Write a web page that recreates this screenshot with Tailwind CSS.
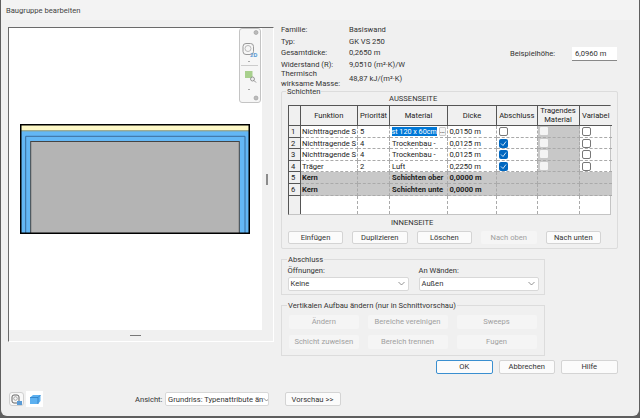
<!DOCTYPE html>
<html lang="de">
<head>
  <meta charset="UTF-8">
  <meta name="viewport" content="width=device-width, initial-scale=1.0">
  <title>Baugruppe bearbeiten</title>
  <script src="https://cdn.jsdelivr.net/npm/@tailwindcss/browser@4"></script>
</head>
<body class="bg-[#5f5f5f] overflow-hidden">

  <!-- Dialog -->
  <div class="w-[638px] h-[416px] ml-px bg-[#f0f0f0] rounded-b-md font-['Roboto',sans-serif] text-[7.600px] leading-[11px] text-[#333] flex flex-col overflow-hidden">

    <!-- Titlebar -->
    <div class="h-[20px] shrink-0 pl-[5px] pt-[5px] bg-[#f3f3f3] text-[#444]">Baugruppe bearbeiten</div>

    <div class="flex flex-1">

      <!-- Preview -->
      <div class="w-[273px] shrink-0 pl-[7px] pt-[7px]">
        <div class="relative w-[266px] h-[315px] border-t border-l border-[#6a6a6a] border-r border-r-white border-b border-b-white flex flex-col">
          <div class="flex flex-1">
            <div class="relative flex-1 bg-white">
              <svg class="absolute left-[11px] top-[96px]" width="232" height="112" viewBox="0 0 232 112">
                <rect x="0" y="0" width="230" height="110" fill="#63b7f5"/>
                <rect x="0" y="1" width="230" height="5.500" fill="#fdf8c6"/>
                <line x1="0" y1="6.800" x2="230" y2="6.800" stroke="#9a9a70" stroke-width="1"/>
                <path d="M5.700 110V12.300H225V110" fill="none" stroke="#3b6c9c" stroke-width="1"/>
                <rect x="10.700" y="17.500" width="208.600" height="92" fill="#b4b4b4" stroke="#444" stroke-width="1"/>
                <rect x=".75" y=".75" width="228.500" height="108.500" fill="none" stroke="#000" stroke-width="1.500"/>
              </svg>
              <!-- Navigationsleiste -->
              <div class="absolute left-[230px] top-0 w-[22px] h-[75px] bg-[#f6f6f6] border border-[#c4c4c4] rounded-[3px]">
                <svg width="20" height="73" viewBox="0 0 20 73">
                  <circle cx="16" cy="3.500" r="2" fill="#bbb" stroke="#999" stroke-width=".6"/>
                  <circle cx="16" cy="69" r="2" fill="#bbb" stroke="#999" stroke-width=".6"/>
                  <rect x="3" y="14.500" width="10.500" height="11" rx="3" fill="none" stroke="#999" stroke-width="1"/>
                  <circle cx="8" cy="19.500" r="3" fill="none" stroke="#aaa" stroke-width=".8"/>
                  <path d="M8 32l1 1 1-1" fill="none" stroke="#888" stroke-width=".7"/>
                  <line x1="1" y1="36.500" x2="18" y2="36.500" stroke="#ccc"/>
                  <rect x="5" y="42" width="7.500" height="7" fill="#a8d08d"/>
                  <circle cx="12.500" cy="50" r="2" fill="#eee" stroke="#777" stroke-width=".7"/>
                  <line x1="14" y1="51.500" x2="16" y2="53.500" stroke="#777" stroke-width=".8"/>
                  <path d="M8 60l1 1 1-1" fill="none" stroke="#888" stroke-width=".7"/>
                </svg>
                <span class="absolute left-[10px] top-[22px] text-[6px] leading-[7px] font-bold text-[#5b9bd5]">2D</span>
              </div>
            </div>
            <div class="w-[11px] flex items-center"><span class="block w-[2px] h-[11px] ml-[4px] mt-[1px] bg-[#8c8c8c]"></span></div>
          </div>
          <div class="h-[11px] pt-[5px] pl-[121px]"><span class="block w-[11px] h-px bg-[#777]"></span></div>
        </div>

        <!-- Ansicht -->
        <div class="flex items-center mt-[49px] relative">
          <div class="w-[15px] h-[14px] ml-px bg-[#f8f8f8] border border-[#d0d0d0] rounded-[3px] flex items-center justify-center">
            <svg width="11" height="11" viewBox="0 0 11 11"><rect x="1" y="1" width="7" height="8" rx="2" fill="none" stroke="#666" stroke-width="1"/><circle cx="4.500" cy="4.500" r="1.800" fill="none" stroke="#888" stroke-width=".7"/><rect x="6" y="7" width="5" height="4" fill="#5b9bd5"/></svg>
          </div>
          <div class="w-[17px] h-[16px] ml-[2px] bg-white flex items-center justify-center">
            <svg width="12" height="11" viewBox="0 0 12 11"><path d="M1 3.500L4 1h7.500v6L9 10H1z" fill="#5cb0f0"/><path d="M1 3.500h8V10M9 3.500L11.500 1" fill="none" stroke="#2d7fc4" stroke-width=".8"/></svg>
          </div>
          <span class="ml-[92px] w-[30px]">Ansicht:</span>
          <div class="w-[104px] h-[13.500px] bg-white border border-[#d8d8d8] rounded-[2px] pl-[2px] flex items-center justify-between whitespace-nowrap overflow-hidden">
            <span>Grundriss: Typenattribute än</span>
            <svg class="mr-[2px] shrink-0" width="7" height="5" viewBox="0 0 7 5"><path d="M.5 1l3 3 3-3" fill="none" stroke="#666" stroke-width=".7"/></svg>
          </div>
        </div>
      </div>

      <!-- Rechte Seite -->
      <div class="w-[337px] ml-[7px] pt-[4px]">

        <!-- Angaben -->
        <div class="flex h-[67px]">
          <div class="w-[229px]">
            <div class="flex h-[11.500px]"><span class="w-[68px]">Familie:</span><span>Basiswand</span></div>
            <div class="flex h-[11.500px]"><span class="w-[68px]">Typ:</span><span>GK VS 250</span></div>
            <div class="flex h-[11.500px]"><span class="w-[68px]">Gesamtdicke:</span><span>0,2650 m</span></div>
            <div class="flex h-[11.500px]"><span class="w-[68px]">Widerstand (R):</span><span>9,0510 (m²·K)/W</span></div>
            <div class="flex items-center h-[17px] leading-[9.500px]"><span class="w-[68px] shrink-0 pr-[2px]">Thermisch wirksame Masse:</span><span>48,87 kJ/(m²·K)</span></div>
          </div>
          <div class="flex items-start pt-[23px]">
            <span class="w-[62px] pt-px">Beispielhöhe:</span>
            <span class="w-[45px] h-[14px] pl-[3px] pt-px bg-white border-b border-[#888]">6,0960 m</span>
          </div>
        </div>

        <!-- Schichten -->
        <div class="relative w-[337px] h-[158px] mt-[-0.500px] border border-[#dcdcdc] rounded-[2px] px-[6px]">
          <span class="absolute left-[4px] top-[-6px] px-px bg-[#f0f0f0]">Schichten</span>
          <div class="h-[13px] pt-px pl-[101px]">AUSSENSEITE</div>
          <div class="grid grid-cols-[11.500px_57.500px_32px_58px_49px_40.500px_42px_32.500px] grid-rows-[20.500px_repeat(6,11.600px)_18px] w-[323px] bg-white border border-[#c4c4c4] border-t-[#555] border-l-[#555] text-[#222]">
            <!-- Kopf -->
            <div class="bg-[#f0f0f0] border-r border-b border-[#555]"></div>
            <div class="bg-[#f0f0f0] border-r border-b border-[#555] flex items-center justify-center">Funktion</div>
            <div class="bg-[#f0f0f0] border-r border-b border-[#555] flex items-center justify-center">Priorität</div>
            <div class="bg-[#f0f0f0] border-r border-b border-[#555] flex items-center justify-center">Material</div>
            <div class="bg-[#f0f0f0] border-r border-b border-[#555] flex items-center justify-center">Dicke</div>
            <div class="bg-[#f0f0f0] border-r border-b border-[#555] flex items-center justify-center">Abschluss</div>
            <div class="bg-[#f0f0f0] border-r border-b border-[#555] flex items-center justify-center text-center leading-[9.500px]">Tragendes Material</div>
            <div class="bg-[#f0f0f0] border-b border-[#555] flex items-center justify-center">Variabel</div>

            <!-- Zeile 1 -->
            <div class="bg-[#f0f0f0] border-r border-b border-[#555] pl-[2px]">1</div>
            <div class="border-r border-b border-dashed border-[#aaa] pl-[1.500px] whitespace-nowrap overflow-hidden">Nichttragende S</div>
            <div class="border-r border-b border-dashed border-[#aaa] pl-[2px]">5</div>
            <div class="flex border-r border-b border-dashed border-[#aaa] pl-[1.500px] pr-px whitespace-nowrap overflow-hidden"><span class="w-[46px] h-[9px] mt-px leading-[9px] text-[7.200px] bg-[#0078d7] text-white">st 120 x 60cm</span><span class="w-[8px] ml-[2px] mt-px h-[8.500px] leading-[6px] text-center bg-[#f5f5f5] border border-[#ccc] rounded-[1px]">…</span></div>
            <div class="border-r border-b border-dashed border-[#aaa] pl-[1.500px]">0,0150 m</div>
            <div class="border-r border-b border-dashed border-[#aaa] pl-[2px] pt-px"><span class="block w-[9px] h-[9px] border border-[#777] rounded-[2px]"></span></div>
            <div class="border-r border-b border-dashed border-[#aaa] bg-[#c8c8c8] pl-[2px] pt-px"><span class="block w-[8px] h-[8px] bg-[#f4f4f4] rounded-[1px]"></span></div>
            <div class="border-b border-dashed border-[#aaa] pl-[2px] pt-px"><span class="block w-[9px] h-[9px] border border-[#777] rounded-[2px]"></span></div>

            <!-- Zeile 2 -->
            <div class="bg-[#f0f0f0] border-r border-b border-[#555] pl-[2px]">2</div>
            <div class="border-r border-b border-dashed border-[#aaa] pl-[1.500px] whitespace-nowrap overflow-hidden">Nichttragende S</div>
            <div class="border-r border-b border-dashed border-[#aaa] pl-[2px]">4</div>
            <div class="border-r border-b border-dashed border-[#aaa] pl-[2px] whitespace-nowrap overflow-hidden">Trockenbau -</div>
            <div class="border-r border-b border-dashed border-[#aaa] pl-[1.500px]">0,0125 m</div>
            <div class="border-r border-b border-dashed border-[#aaa] pl-[2px] pt-px"><span class="flex items-center justify-center w-[9px] h-[9px] bg-[#0067c0] rounded-[2px]"><svg width="7" height="7" viewBox="0 0 7 7"><path d="M1 3.500l2 2 3-4" fill="none" stroke="#fff" stroke-width=".8"/></svg></span></div>
            <div class="border-r border-b border-dashed border-[#aaa] bg-[#c8c8c8] pl-[2px] pt-px"><span class="block w-[8px] h-[8px] bg-[#f4f4f4] rounded-[1px]"></span></div>
            <div class="border-b border-dashed border-[#aaa] pl-[2px] pt-px"><span class="block w-[9px] h-[9px] border border-[#777] rounded-[2px]"></span></div>

            <!-- Zeile 3 -->
            <div class="bg-[#f0f0f0] border-r border-b border-[#555] pl-[2px]">3</div>
            <div class="border-r border-b border-dashed border-[#aaa] pl-[1.500px] whitespace-nowrap overflow-hidden">Nichttragende S</div>
            <div class="border-r border-b border-dashed border-[#aaa] pl-[2px]">4</div>
            <div class="border-r border-b border-dashed border-[#aaa] pl-[2px] whitespace-nowrap overflow-hidden">Trockenbau -</div>
            <div class="border-r border-b border-dashed border-[#aaa] pl-[1.500px]">0,0125 m</div>
            <div class="border-r border-b border-dashed border-[#aaa] pl-[2px] pt-px"><span class="flex items-center justify-center w-[9px] h-[9px] bg-[#0067c0] rounded-[2px]"><svg width="7" height="7" viewBox="0 0 7 7"><path d="M1 3.500l2 2 3-4" fill="none" stroke="#fff" stroke-width=".8"/></svg></span></div>
            <div class="border-r border-b border-dashed border-[#aaa] bg-[#c8c8c8] pl-[2px] pt-px"><span class="block w-[8px] h-[8px] bg-[#f4f4f4] rounded-[1px]"></span></div>
            <div class="border-b border-dashed border-[#aaa] pl-[2px] pt-px"><span class="block w-[9px] h-[9px] border border-[#777] rounded-[2px]"></span></div>

            <!-- Zeile 4 -->
            <div class="bg-[#f0f0f0] border-r border-b border-[#555] pl-[2px]">4</div>
            <div class="border-r border-b border-dashed border-[#aaa] pl-[1.500px] whitespace-nowrap overflow-hidden">Träger</div>
            <div class="border-r border-b border-dashed border-[#aaa] pl-[2px]">2</div>
            <div class="border-r border-b border-dashed border-[#aaa] pl-[2px]">Luft</div>
            <div class="border-r border-b border-dashed border-[#aaa] pl-[1.500px]">0,2250 m</div>
            <div class="border-r border-b border-dashed border-[#aaa] pl-[2px] pt-px"><span class="flex items-center justify-center w-[9px] h-[9px] bg-[#0067c0] rounded-[2px]"><svg width="7" height="7" viewBox="0 0 7 7"><path d="M1 3.500l2 2 3-4" fill="none" stroke="#fff" stroke-width=".8"/></svg></span></div>
            <div class="border-r border-b border-dashed border-[#aaa] bg-[#c8c8c8] pl-[2px] pt-px"><span class="block w-[8px] h-[8px] bg-[#f4f4f4] rounded-[1px]"></span></div>
            <div class="border-b border-dashed border-[#aaa] pl-[2px] pt-px"><span class="block w-[9px] h-[9px] border border-[#777] rounded-[2px]"></span></div>

            <!-- Zeile 5 -->
            <div class="bg-[#f0f0f0] border-r border-b border-[#555] pl-[2px]">5</div>
            <div class="bg-[#c8c8c8] border-r border-b border-dashed border-[#aaa] pl-[1.500px] font-bold">Kern</div>
            <div class="bg-[#c8c8c8] border-r border-b border-dashed border-[#aaa]"></div>
            <div class="bg-[#c8c8c8] border-r border-b border-dashed border-[#aaa] pl-[2px] font-bold whitespace-nowrap overflow-hidden">Schichten ober</div>
            <div class="bg-[#c8c8c8] border-r border-b border-dashed border-[#aaa] pl-[1.500px] font-bold">0,0000 m</div>
            <div class="bg-[#c8c8c8] border-r border-b border-dashed border-[#aaa]"></div>
            <div class="bg-[#c8c8c8] border-r border-b border-dashed border-[#aaa]"></div>
            <div class="bg-[#c8c8c8] border-b border-dashed border-[#aaa]"></div>

            <!-- Zeile 6 -->
            <div class="bg-[#f0f0f0] border-r border-b border-[#555] pl-[2px]">6</div>
            <div class="bg-[#c8c8c8] border-r border-b border-dashed border-[#aaa] pl-[1.500px] font-bold">Kern</div>
            <div class="bg-[#c8c8c8] border-r border-b border-dashed border-[#aaa]"></div>
            <div class="bg-[#c8c8c8] border-r border-b border-dashed border-[#aaa] pl-[2px] font-bold whitespace-nowrap overflow-hidden">Schichten unte</div>
            <div class="bg-[#c8c8c8] border-r border-b border-dashed border-[#aaa] pl-[1.500px] font-bold">0,0000 m</div>
            <div class="bg-[#c8c8c8] border-r border-b border-dashed border-[#aaa]"></div>
            <div class="bg-[#c8c8c8] border-r border-b border-dashed border-[#aaa]"></div>
            <div class="bg-[#c8c8c8] border-b border-dashed border-[#aaa]"></div>

            <!-- Leere Zeile -->
            <div class="bg-[#f0f0f0] border-r border-[#555]"></div>
            <div class="border-r border-dashed border-[#aaa]"></div>
            <div class="border-r border-dashed border-[#aaa]"></div>
            <div class="border-r border-dashed border-[#aaa]"></div>
            <div class="border-r border-dashed border-[#aaa]"></div>
            <div class="border-r border-dashed border-[#aaa]"></div>
            <div class="border-r border-dashed border-[#aaa]"></div>
            <div></div>
          </div>
          <div class="h-[11px] mt-[2.500px] pl-[103px]">INNENSEITE</div>
          <div class="flex gap-[9px] mt-[2.500px]">
            <button class="w-[55px] h-[13.500px] bg-[#fbfbfb] border border-[#d4d4d4] rounded-[2px]">Einfügen</button>
            <button class="w-[55.500px] h-[13.500px] bg-[#fbfbfb] border border-[#d4d4d4] rounded-[2px]">Duplizieren</button>
            <button class="w-[55.500px] h-[13.500px] bg-[#fbfbfb] border border-[#d4d4d4] rounded-[2px]">Löschen</button>
            <button class="w-[55.500px] h-[13.500px] bg-[#f5f5f5] rounded-[2px] text-[#a0a0a0]">Nach oben</button>
            <button class="w-[55.500px] h-[13.500px] bg-[#fbfbfb] border border-[#d4d4d4] rounded-[2px]">Nach unten</button>
          </div>
        </div>

        <!-- Abschluss -->
        <div class="relative w-[264px] h-[36.500px] mt-[10px] border border-[#dcdcdc] px-[5.500px]">
          <span class="absolute left-[5px] top-[-6px] px-px bg-[#f0f0f0]">Abschluss</span>
          <div class="flex gap-[10px] pt-[5px]">
            <div class="w-[121px]">
              <div class="h-[11px]">Öffnungen:</div>
              <div class="flex items-center justify-between h-[14px] mt-[1px] bg-white border border-[#d8d8d8] rounded-[2px] pl-[2px] pr-[3px]">Keine<svg width="7" height="5" viewBox="0 0 7 5"><path d="M.5 1l3 3 3-3" fill="none" stroke="#666" stroke-width=".7"/></svg></div>
            </div>
            <div class="w-[120px]">
              <div class="h-[11px]">An Wänden:</div>
              <div class="flex items-center justify-between h-[14px] mt-[1px] bg-white border border-[#d8d8d8] rounded-[2px] pl-[2px] pr-[3px]">Außen<svg width="7" height="5" viewBox="0 0 7 5"><path d="M.5 1l3 3 3-3" fill="none" stroke="#666" stroke-width=".7"/></svg></div>
            </div>
          </div>
        </div>

        <!-- Vertikaler Aufbau -->
        <div class="relative w-[264px] h-[51px] mt-[9.500px] border border-[#dcdcdc] pl-[7px] pt-[9.500px] text-[#a0a0a0]">
          <span class="absolute left-[5px] top-[-6px] px-px bg-[#f0f0f0] text-[#333] whitespace-nowrap">Vertikalen Aufbau ändern (nur in Schnittvorschau)</span>
          <div class="grid grid-cols-[69.500px_80px_80px] gap-x-[9px] gap-y-[6.500px]">
            <button class="h-[13.500px] bg-[#f5f5f5] rounded-[2px]">Ändern</button>
            <button class="h-[13.500px] bg-[#f5f5f5] rounded-[2px]">Bereiche vereinigen</button>
            <button class="h-[13.500px] bg-[#f5f5f5] rounded-[2px]">Sweeps</button>
            <button class="h-[13.500px] bg-[#f5f5f5] rounded-[2px]">Schicht zuweisen</button>
            <button class="h-[13.500px] bg-[#f5f5f5] rounded-[2px]">Bereich trennen</button>
            <button class="h-[13.500px] bg-[#f5f5f5] rounded-[2px]">Fugen</button>
          </div>
        </div>

        <!-- Dialogschaltflächen -->
        <div class="flex gap-[6px] pl-[155px] mt-[4px]">
          <button class="w-[56.500px] h-[14.500px] bg-[#fbfbfb] border border-[#3a8fd0] rounded-[2px]">OK</button>
          <button class="w-[56.500px] h-[14.500px] bg-[#fbfbfb] border border-[#d4d4d4] rounded-[2px]">Abbrechen</button>
          <button class="w-[56.500px] h-[14.500px] bg-[#fbfbfb] border border-[#d4d4d4] rounded-[2px]">Hilfe</button>
        </div>
        <button class="block w-[56px] h-[14px] mt-[18px] ml-[3.500px] bg-[#fbfbfb] border border-[#d4d4d4] rounded-[2px]">Vorschau &gt;&gt;</button>
      </div>
    </div>
  </div>

</body>
</html>
